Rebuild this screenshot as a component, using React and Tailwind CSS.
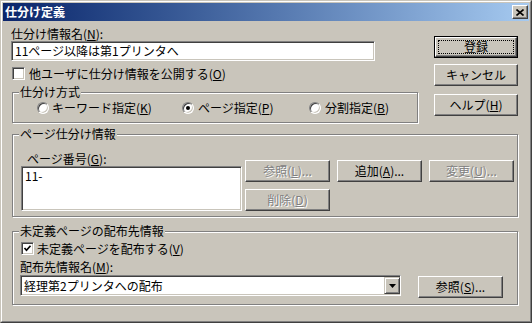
import React from "react";

const U = ({ children }) => <span className="underline underline-offset-[1px]">{children}</span>;

function Btn({ children, className = "", disabled = false, isDefault = false }) {
  const txt = disabled ? "text-[#808080] [text-shadow:1px_1px_0_#fff]" : "text-black";
  if (isDefault) {
    return (
      <div className={`border border-black ${className}`}>
        <div className="h-full w-full border border-t-white border-l-white border-r-[#404040] border-b-[#404040] shadow-[inset_-1px_-1px_0_#808080] p-[2px]">
          <div className={`h-full w-full border border-dotted border-black flex items-center justify-center ${txt}`}>
            {children}
          </div>
        </div>
      </div>
    );
  }
  return (
    <div
      className={`border border-t-white border-l-white border-r-[#404040] border-b-[#404040] shadow-[inset_-1px_-1px_0_#808080] flex items-center justify-center ${txt} ${className}`}
    >
      {children}
    </div>
  );
}

const sunken =
  "border border-t-[#808080] border-l-[#808080] border-b-white border-r-white shadow-[inset_1px_1px_0_#404040,inset_-1px_-1px_0_#c9c5bb] bg-white";

function Check({ checked }) {
  return (
    <div className={`w-[13px] h-[13px] shrink-0 ${sunken} flex items-center justify-center`}>
      {checked && (
        <svg width="9" height="9" viewBox="0 0 9 9">
          <path d="M1.5 4 L3.5 6.2 L7.5 1.8" fill="none" stroke="#000" strokeWidth="1.7" />
        </svg>
      )}
    </div>
  );
}

function Radio({ checked }) {
  return (
    <div className="w-[12px] h-[12px] shrink-0 rounded-full border border-t-[#808080] border-l-[#808080] border-b-white border-r-white shadow-[inset_1px_1px_0_#404040,inset_-1px_-1px_0_#c9c5bb] bg-white flex items-center justify-center">
      {checked && <div className="w-[4px] h-[4px] rounded-full bg-black" />}
    </div>
  );
}

const etched = "border border-[#808080] shadow-[inset_1px_1px_0_#fff,1px_1px_0_#fff]";

function Group({ title, className = "", children }) {
  return (
    <fieldset className={`${etched} ${className}`}>
      <legend className="ml-[6px] px-[1px] bg-[#c9c5bb] leading-[14px]">{title}</legend>
      {children}
    </fieldset>
  );
}

export default function App() {
  return (
    <div className="w-[532px] h-[323px] bg-[#c9c5bb] text-[12px] leading-[14px] text-black font-['Noto_Sans_CJK_JP','Noto_Sans',sans-serif] overflow-hidden">
      <div className="w-full h-full border border-t-[#c9c5bb] border-l-[#c9c5bb] border-r-[#404040] border-b-[#404040]">
        <div className="w-full h-full border border-t-white border-l-white border-r-[#808080] border-b-[#808080] p-[1px] flex flex-col">
          {/* Title bar */}
          <div className="h-[18px] shrink-0 bg-gradient-to-r from-[#0a246a] to-[#a6caf0] flex items-center justify-between pl-[2px] pr-[1px]">
            <span className="text-white font-bold leading-[14px]">仕分け定義</span>
            <div className="w-[16px] h-[14px] border border-t-white border-l-white border-r-[#404040] border-b-[#404040] shadow-[inset_-1px_-1px_0_#808080] bg-[#c9c5bb] flex items-center justify-center">
              <svg width="8" height="7" viewBox="0 0 8 7">
                <path d="M0.5 0.5 L7.5 6.5 M7.5 0.5 L0.5 6.5" stroke="#000" strokeWidth="1.6" />
              </svg>
            </div>
          </div>

          {/* Top section */}
          <div className="flex pl-[8px]">
            <div className="w-[407px] flex flex-col">
              <div className="mt-[6px] h-[14px]">
                仕分け情報名(<U>N</U>):
              </div>
              <div className={`w-[364px] h-[20px] ${sunken} flex items-center pl-[3px]`}>
                11ページ以降は第1プリンタへ
              </div>
              <div className="mt-[6px] h-[13px] flex items-center ml-[1px]">
                <Check />
                <span className="ml-[4px]">
                  他ユーザに仕分け情報を公開する(<U>O</U>)
                </span>
              </div>
              <Group title="仕分け方式" className="mt-[5px] ml-[1px] w-[406px] h-[38px]">
                <div className="mt-[2px] h-[14px] flex items-center pl-[24px]">
                  <div className="w-[145px] flex items-center">
                    <Radio />
                    <span className="ml-[3px]">
                      キーワード指定(<U>K</U>)
                    </span>
                  </div>
                  <div className="w-[127px] flex items-center">
                    <Radio checked />
                    <span className="ml-[4px]">
                      ページ指定(<U>P</U>)
                    </span>
                  </div>
                  <div className="flex items-center">
                    <Radio />
                    <span className="ml-[4px]">
                      分割指定(<U>B</U>)
                    </span>
                  </div>
                </div>
              </Group>
            </div>
            <div className="ml-[16px] mt-[15px] flex flex-col">
              <Btn isDefault className="w-[84px] h-[22px]">登録</Btn>
              <Btn className="w-[84px] h-[22px] mt-[6px]">キャンセル</Btn>
              <Btn className="w-[84px] h-[22px] mt-[8px]">
                ヘルプ(<U>H</U>)
              </Btn>
            </div>
          </div>

          {/* Page group */}
          <Group title="ページ仕分け情報" className="mt-[4px] ml-[9px] w-[506px] h-[90px]">
            <div className="flex">
              <div className="ml-[8px] w-[221px] flex flex-col">
                <div className="mt-[11px] ml-[6px] h-[14px]">
                  ページ番号(<U>G</U>):
                </div>
                <div className={`w-[221px] h-[45px] ${sunken} pl-[3px] pt-[2px]`}>11-</div>
              </div>
              <div className="ml-[3px] mt-[19px] grid grid-cols-[85px_85px_85px] gap-x-[7px] gap-y-[7px]">
                <Btn disabled className="h-[22px]">
                  参照(<U>L</U>)...
                </Btn>
                <Btn className="h-[22px]">
                  追加(<U>A</U>)...
                </Btn>
                <Btn disabled className="h-[22px]">
                  変更(<U>U</U>)...
                </Btn>
                <Btn disabled className="h-[22px]">
                  削除(<U>D</U>)
                </Btn>
              </div>
            </div>
          </Group>

          {/* Distribution group */}
          <Group title="未定義ページの配布先情報" className="mt-[7px] ml-[9px] w-[506px] h-[81px]">
            <div className="flex flex-col pl-[7px]">
              <div className="mt-[4px] ml-[1px] h-[13px] flex items-center">
                <Check checked />
                <span className="ml-[3px]">
                  未定義ページを配布する(<U>V</U>)
                </span>
              </div>
              <div className="mt-[5px] h-[14px]">
                配布先情報名(<U>M</U>):
              </div>
              <div className="mt-[1px] flex items-start">
                <div className={`w-[381px] h-[21px] ${sunken} flex items-center justify-between pl-[3px]`}>
                  <span>経理第2プリンタへの配布</span>
                  <div className="w-[16px] h-[17px] border border-t-[#c9c5bb] border-l-[#c9c5bb] border-r-[#404040] border-b-[#404040] shadow-[inset_1px_1px_0_#fff,inset_-1px_-1px_0_#808080] bg-[#c9c5bb] flex items-center justify-center">
                    <svg width="7" height="4" viewBox="0 0 7 4">
                      <path d="M0 0 H7 L3.5 4 Z" fill="#000" />
                    </svg>
                  </div>
                </div>
                <Btn className="ml-[17px] mt-[1px] w-[85px] h-[22px]">
                  参照(<U>S</U>)...
                </Btn>
              </div>
            </div>
          </Group>
        </div>
      </div>
    </div>
  );
}
